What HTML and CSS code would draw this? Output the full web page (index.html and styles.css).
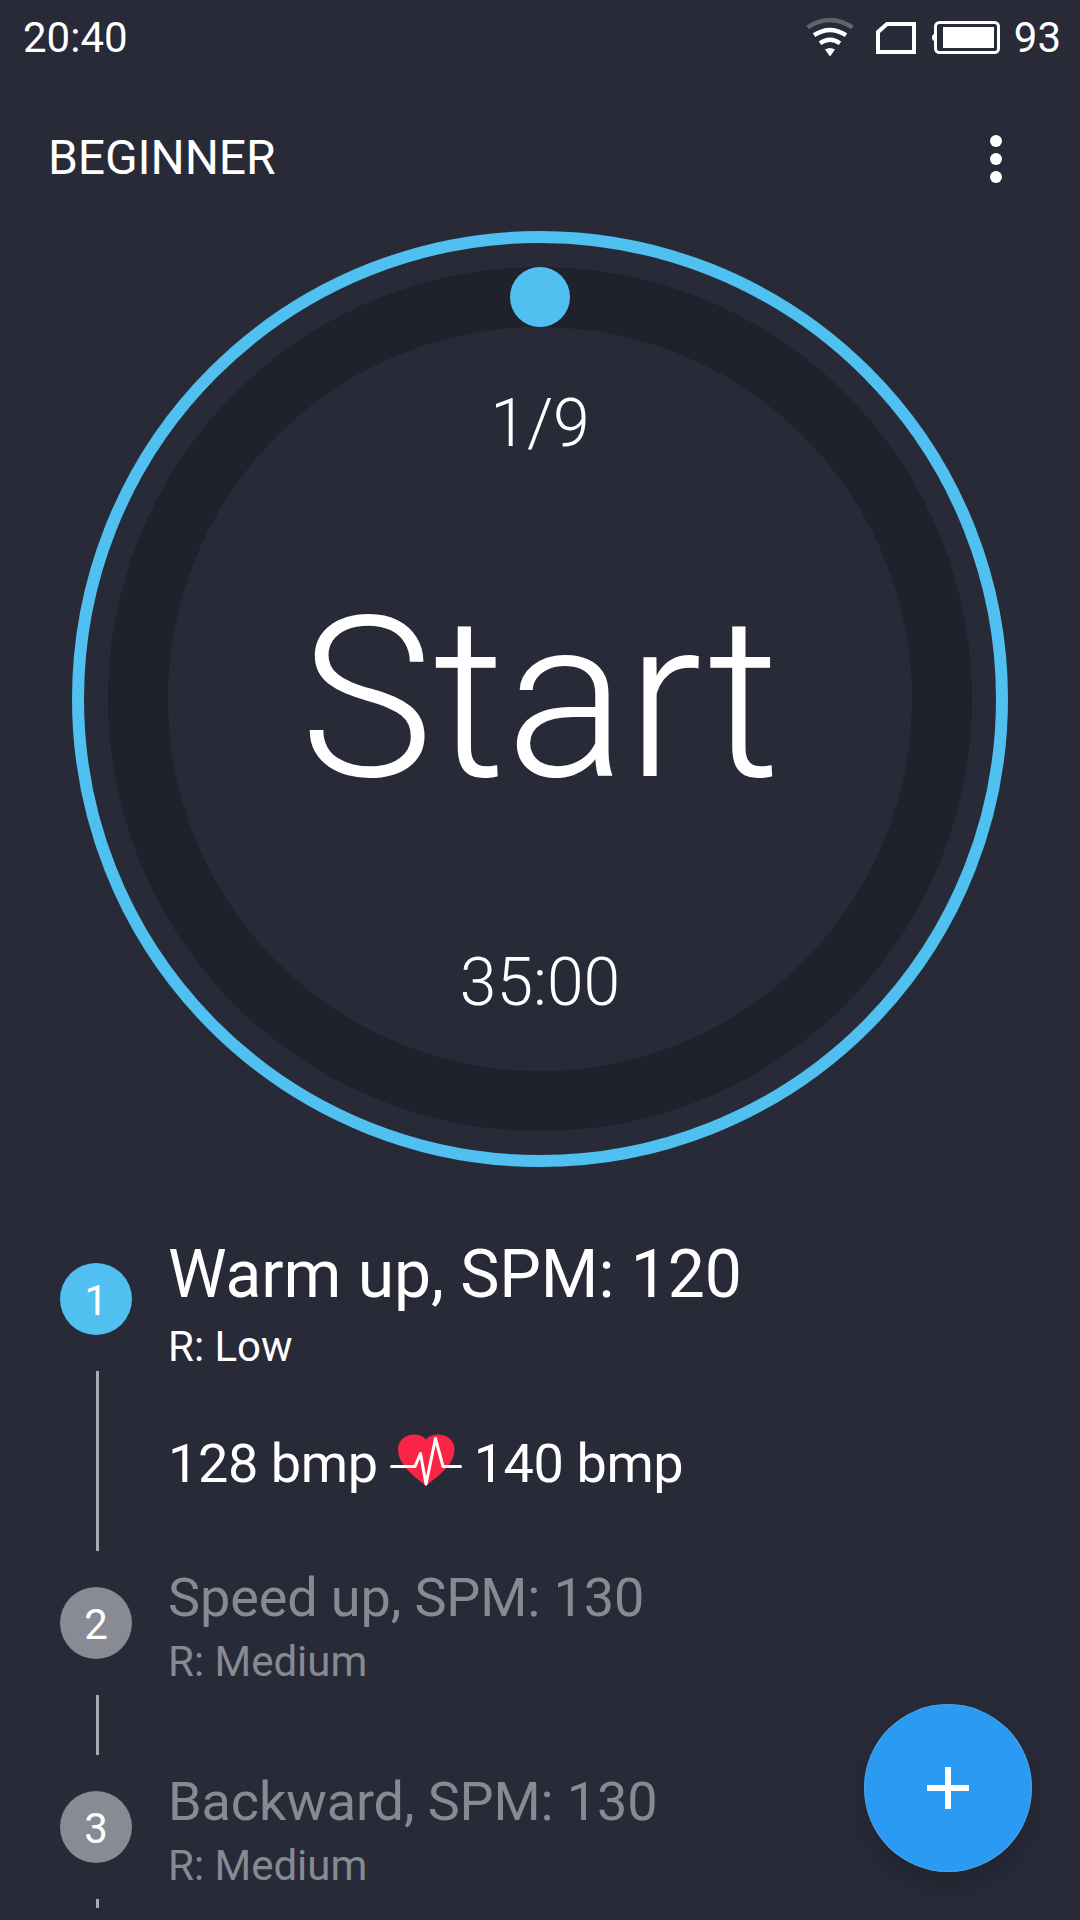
FILE: index.html
```html
<!DOCTYPE html>
<html lang="en">
<head>
  <meta charset="UTF-8" />
  <meta name="viewport" content="width=device-width, initial-scale=1" />
  <title>Beginner</title>
  <link rel="stylesheet" href="styles.css">
</head>
<body>

  <!-- Status bar -->
  <div class="statusbar">
    <span>20:40</span>
    <div class="status-icons">
      <svg class="wifi" width="48" height="40" viewBox="0 0 48 40" fill="none" stroke="#fff" stroke-width="4.4">
        <path d="M1.5 9.5 Q24 -5.5 46.5 9.5" stroke="#62636f" />
        <path d="M8 17.2 Q24 6.8 40 17.2" />
        <path d="M14 25.2 Q24 18.4 34 25.2" />
        <path d="M19 31.6 Q24 28.4 29 31.6 L24 38.5 Z" fill="#fff" stroke="none" />
      </svg>
      <svg class="sim" width="40" height="32" viewBox="0 0 40 32" fill="none" stroke="#fff" stroke-width="4">
        <path d="M11 2 H38 V30 H2 V10 Z" />
      </svg>
      <svg class="battery" width="68" height="33" viewBox="0 0 68 33">
        <path d="M3 13 Q0 13 0 16.5 Q0 20 3 20 Z" fill="#fff" />
        <rect x="3.5" y="1.5" width="63" height="30" rx="4" fill="none" stroke="#fff" stroke-width="3" />
        <rect x="11" y="6" width="51" height="21" fill="#fff" />
      </svg>
      <span>93</span>
    </div>
  </div>

  <!-- Title bar -->
  <div class="toolbar">
    <h1>BEGINNER</h1>
    <div class="menu">
      <i></i><i></i><i></i>
    </div>
  </div>

  <!-- Timer dial -->
  <div class="dial">
    <div class="track">
      <div class="knob"></div>
      <div class="step">1/9</div>
      <div class="start">Start</div>
      <div class="time">35:00</div>
    </div>
  </div>

  <!-- Workout steps -->
  <div class="steps">
    <div class="item active">
      <div class="rail">
        <div class="number">1</div>
        <div class="line"></div>
      </div>
      <div class="info">
        <h2>Warm up, SPM: 120</h2>
        <p>R: Low</p>
        <div class="pulse">
          <span>128 bmp</span>
          <svg width="72" height="54" viewBox="0 0 72 54">
            <path d="M36 52 C30 46 8 33 8 15.5 C8 -0.5 29 -3.5 36 5.5 C43 -3.5 64.5 -0.5 64.5 15.5 C64.5 33 42 46 36 52 Z" fill="#fa2545" />
            <path d="M1.5 32.5 H25 L30.5 19.5 L36 50 L45.5 4.5 L53 32.5 H70.5" fill="none" stroke="#fff" stroke-width="3" stroke-linecap="round" stroke-linejoin="round" />
          </svg>
          <span>140 bmp</span>
        </div>
      </div>
    </div>
    <div class="item">
      <div class="rail">
        <div class="number">2</div>
        <div class="line"></div>
      </div>
      <div class="info">
        <h2>Speed up, SPM: 130</h2>
        <p>R: Medium</p>
      </div>
    </div>
    <div class="item">
      <div class="rail">
        <div class="number">3</div>
        <div class="line"></div>
      </div>
      <div class="info">
        <h2>Backward, SPM: 130</h2>
        <p>R: Medium</p>
      </div>
    </div>
  </div>

  <button class="fab" aria-label="Add">
    <svg width="42" height="42" viewBox="0 0 42 42" stroke="#fff" stroke-width="6">
      <path d="M0 21 H42 M21 0 V42" />
    </svg>
  </button>

</body>
</html>
```
FILE: styles.css
```css
* {
  box-sizing: border-box;
  margin: 0;
  padding: 0;
}
body {
  display: flex;
  flex-direction: column;
  height: 1920px;
  padding-bottom: 12px;
  overflow: hidden;
  position: relative;
  background: #282a38;
  color: #fff;
  font-family: Roboto, sans-serif;
}
h1, h2 {
  font-weight: 400;
}
.statusbar {
  display: flex;
  justify-content: space-between;
  height: 75px;
  padding: 0 19px 0 23px;
  font-size: 42px;
  line-height: 75px;
}
.status-icons {
  display: flex;
}
.wifi {
  margin: 18px 22px 0 0;
}
.sim {
  margin: 22px 16px 0 0;
}
.battery {
  margin: 21px 14px 0 0;
}
.toolbar {
  display: flex;
  justify-content: space-between;
  align-items: center;
  height: 156px;
  padding: 12px 78px 0 48px;
}
.toolbar h1 {
  font-size: 48px;
  line-height: 56px;
  margin-bottom: 3px;
  letter-spacing: -0.1px;
}
.menu {
  display: flex;
  flex-direction: column;
  gap: 6px;
}
.menu i {
  width: 12px;
  height: 12px;
  border-radius: 50%;
  background: #fff;
}
.dial {
  flex: none;
  align-self: center;
  width: 936px;
  height: 936px;
  padding: 24px;
  border: 12px solid #4fc0ef;
  border-radius: 50%;
}
.track {
  display: flex;
  flex-direction: column;
  align-items: center;
  height: 864px;
  border: 60px solid #1f212d;
  border-radius: 50%;
}
.knob {
  flex: none;
  width: 60px;
  height: 60px;
  margin-top: -60px;
  border-radius: 50%;
  background: #4fc0ef;
}
.step, .time {
  font-size: 66px;
  line-height: 78px;
  font-weight: 300;
}
.step {
  margin-top: 58px;
}
.start {
  margin-top: 104px;
  font-size: 225px;
  line-height: 264px;
  font-weight: 300;
}
.time {
  margin-top: 113px;
}
.steps {
  flex: 1;
  min-height: 0;
  margin-top: 60px;
  padding-left: 60px;
  overflow: hidden;
}
.item {
  display: flex;
  gap: 36px;
}
.rail {
  display: flex;
  flex-direction: column;
  gap: 36px;
  width: 72px;
  padding-top: 36px;
}
.number {
  height: 72px;
  border-radius: 50%;
  background: #888b93;
  color: #fff;
  font-size: 42px;
  line-height: 75px;
  text-align: center;
}
.line {
  width: 3px;
  height: 60px;
  margin-left: 36px;
  background: #a9abb0;
}
.info {
  padding-top: 15px;
  color: #878a93;
}
.info h2 {
  font-size: 54px;
  line-height: 64px;
  letter-spacing: -0.12px;
}
.info p {
  margin-top: 7px;
  font-size: 42px;
  line-height: 50px;
}
.active .number {
  background: #4fc0ef;
}
.active .line {
  height: 180px;
}
.active .info {
  padding-top: 9px;
  color: #fff;
}
.active h2 {
  font-size: 66px;
  line-height: 78px;
  letter-spacing: -0.07px;
}
.active p {
  margin-top: 8px;
}
.pulse {
  display: flex;
  margin-top: 60px;
  font-size: 54px;
  line-height: 64px;
  letter-spacing: -0.4px;
}
.pulse svg {
  margin: 2px 12px 0;
}
.fab {
  display: flex;
  align-items: center;
  justify-content: center;
  position: absolute;
  right: 48px;
  bottom: 48px;
  width: 168px;
  height: 168px;
  border: none;
  border-radius: 50%;
  background: #2b9af3;
  box-shadow: 0 12px 24px rgba(0, 0, 0, 0.18), inset 0 0 0 1px rgba(110, 170, 220, 0.5);
}
```
